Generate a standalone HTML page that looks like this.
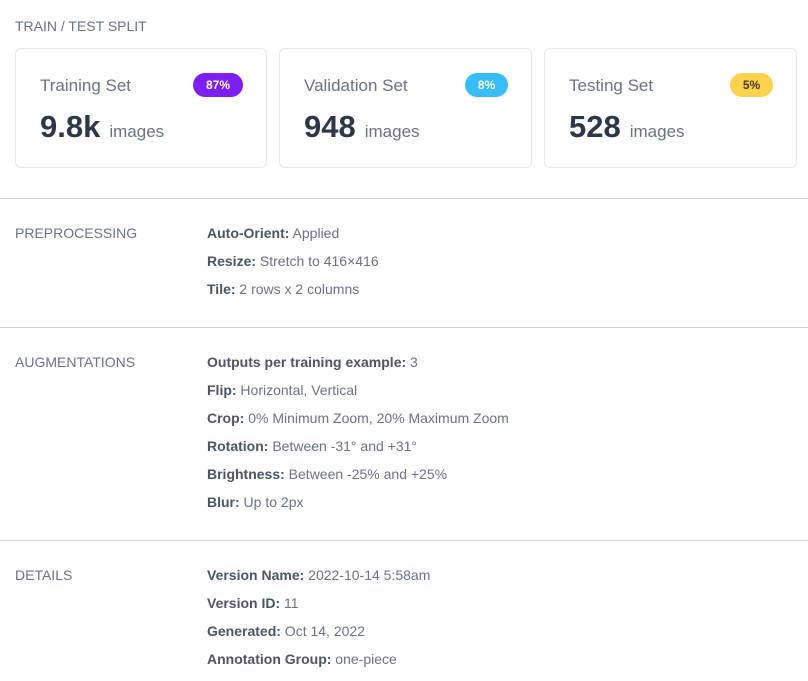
<!DOCTYPE html><html><head><style>
body{margin:0;width:808px;height:681px;background:#fff;font-family:"Liberation Sans",sans-serif;color:#6b7280;position:relative;overflow:hidden}
.a{position:absolute}
.h{font-size:14px;color:#6b7280}
.card{position:absolute;top:48px;height:120px;border:1px solid #e5e7eb;border-radius:6px;width:250px;box-sizing:border-box}
.card .t{position:absolute;left:24px;top:27px;font-size:17px;color:#6b7280}
.card .b{position:absolute;top:24px;height:24px;border-radius:12px;font-size:12px;font-weight:bold;line-height:24px;text-align:center}
.card .n{position:absolute;left:24px;top:60px;font-size:31px;font-weight:bold;color:#2d3748}
.card .n span{font-size:17px;font-weight:normal;color:#6b7280;margin-left:9px}
.hr{position:absolute;left:0;width:808px;height:1px;background:#d1d5db}
.r{position:absolute;left:207px;font-size:14px;color:#6b7280}
.r b{color:#4b5563}
</style></head><body>
<div class="a h" style="left:15px;top:18px">TRAIN / TEST SPLIT</div>
<div class="card" style="left:15px;width:252px"><div class="t">Training Set</div><div class="b" style="left:177px;width:50px;background:#7c1ff0;color:#fff">87%</div><div class="n">9.8k<span>images</span></div></div>
<div class="card" style="left:279px;width:253px"><div class="t">Validation Set</div><div class="b" style="left:185px;width:43px;background:#38bdf8;color:#fff">8%</div><div class="n">948<span>images</span></div></div>
<div class="card" style="left:544px;width:253px"><div class="t">Testing Set</div><div class="b" style="left:185px;width:43px;background:#fcd34d;color:#4b3a0a">5%</div><div class="n">528<span>images</span></div></div>
<div class="hr" style="top:198px"></div>
<div class="a h" style="left:15px;top:225px">PREPROCESSING</div>
<div class="r" style="top:225px"><b>Auto-Orient:</b> Applied</div>
<div class="r" style="top:253px"><b>Resize:</b> Stretch to 416×416</div>
<div class="r" style="top:281px"><b>Tile:</b> 2 rows x 2 columns</div>
<div class="hr" style="top:327px"></div>
<div class="a h" style="left:15px;top:354px">AUGMENTATIONS</div>
<div class="r" style="top:354px"><b>Outputs per training example:</b> 3</div>
<div class="r" style="top:382px"><b>Flip:</b> Horizontal, Vertical</div>
<div class="r" style="top:410px"><b>Crop:</b> 0% Minimum Zoom, 20% Maximum Zoom</div>
<div class="r" style="top:438px"><b>Rotation:</b> Between -31° and +31°</div>
<div class="r" style="top:466px"><b>Brightness:</b> Between -25% and +25%</div>
<div class="r" style="top:494px"><b>Blur:</b> Up to 2px</div>
<div class="hr" style="top:540px"></div>
<div class="a h" style="left:15px;top:567px">DETAILS</div>
<div class="r" style="top:567px"><b>Version Name:</b> 2022-10-14 5:58am</div>
<div class="r" style="top:595px"><b>Version ID:</b> 11</div>
<div class="r" style="top:623px"><b>Generated:</b> Oct 14, 2022</div>
<div class="r" style="top:651px"><b>Annotation Group:</b> one-piece</div>
</body></html>
